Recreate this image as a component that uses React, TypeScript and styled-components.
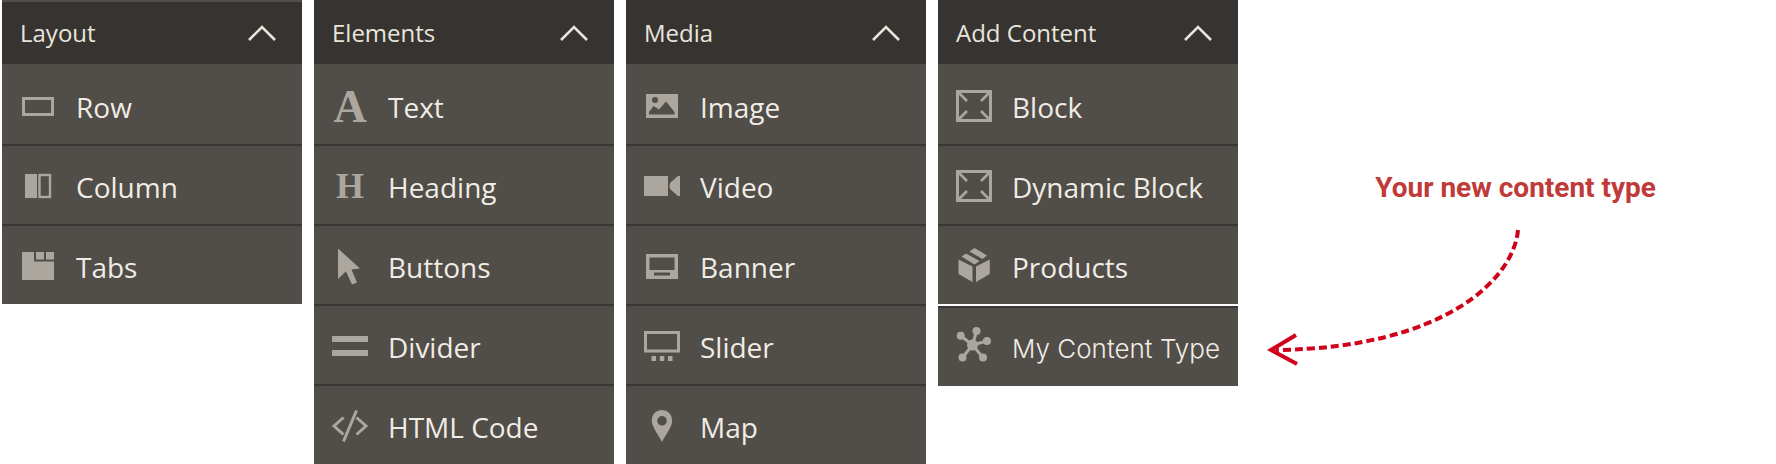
import React, { useState } from "react";
import styled, { createGlobalStyle } from "styled-components";

const GlobalStyle = createGlobalStyle`
  *, *::before, *::after { box-sizing: border-box; }
  body {
    margin: 0;
    background: #ffffff;
    font-family: "Open Sans", "Noto Sans", sans-serif;
  }
`;

const Page = styled.main`
  display: flex;
  align-items: flex-start;
  padding-left: 2px;
`;

const Panels = styled.div`
  display: flex;
  align-items: flex-start;
  flex: 0 1 auto;
  gap: 12px;
`;

const Panel = styled.section`
  width: 300px;
`;

const PanelTitle = styled.h2`
  margin: 0;
  font-size: 24px;
  font-weight: 400;
`;

const PanelToggle = styled.button<{ $edged?: boolean }>`
  display: flex;
  align-items: center;
  justify-content: space-between;
  width: 100%;
  height: 64px;
  padding: ${(p) => (p.$edged ? "0 26px 0 18px" : "2px 26px 0 18px")};
  border: 0;
  border-top: ${(p) => (p.$edged ? "2px solid #514d48" : "0")};
  background: #373330;
  color: #e9e5dd;
  font: inherit;
  line-height: 32px;
  text-align: left;
  cursor: pointer;
`;

const Chevron = styled.svg<{ $open: boolean }>`
  width: 28px;
  height: 18px;
  fill: none;
  stroke: #e9e5dd;
  stroke-width: 2.6;
  transform: ${(p) => (p.$open ? "none" : "rotate(180deg)")};
`;

const TypeList = styled.ul`
  margin: 0;
  padding: 0;
  list-style: none;
`;

const TypeItem = styled.li<{ $custom?: boolean }>`
  display: flex;
  align-items: center;
  gap: 20px;
  height: 80px;
  margin-top: ${(p) => (p.$custom ? "2px" : "0")};
  padding: 0 18px;
  border-top: 2px solid #3b3633;
  background: #514d48;
  color: #f0ece5;
  font-family: ${(p) => (p.$custom ? '"Inter", sans-serif' : "inherit")};
  font-size: ${(p) => (p.$custom ? "26px" : "28px")};
  font-weight: ${(p) => (p.$custom ? 300 : 400)};
  line-height: 38px;
  white-space: nowrap;
  cursor: grab;

  &:first-child {
    border-top-color: #514d48;
  }
`;

const TypeLabel = styled.span`
  padding-top: 4px;
`;

const Icon = styled.svg`
  flex: none;
  width: 36px;
  height: 36px;
  overflow: visible;
  fill: #aba79f;
`;

const Lines = styled.g`
  fill: none;
  stroke: #aba79f;
  stroke-width: 3;
`;

const Letter = styled.text<{ $size: number }>`
  font-family: "Liberation Serif", serif;
  font-size: ${(p) => p.$size}px;
  font-weight: 700;
  text-anchor: middle;
`;

const Callout = styled.aside`
  display: flex;
  flex-direction: column;
  flex: 0 0 auto;
  gap: 16px;
  width: 418px;
  padding: 168px 0 0 28px;
`;

const CalloutText = styled.p`
  margin: 0;
  color: #c03a39;
  font-family: "Roboto", "Open Sans", sans-serif;
  font-size: 28px;
  font-weight: 700;
  line-height: 40px;
  text-align: right;
  white-space: nowrap;
`;

const CalloutArrow = styled.svg`
  width: 260px;
  height: 144px;
  fill: none;
  stroke: #d0021b;
  stroke-width: 4;
`;

const blockIcon = (
  <Lines>
    <rect x="1.5" y="4.5" width="33" height="29" />
    <path d="M3 6l8 8M33 6l-8 8M3 32l8-8M33 32l-8-8" strokeWidth="2.6" />
  </Lines>
);

const icons: Record<string, React.ReactNode> = {
  row: (
    <Lines>
      <rect x="3.5" y="11.5" width="29" height="16" />
    </Lines>
  ),
  column: (
    <>
      <rect x="5" y="7" width="12" height="24" />
      <Lines>
        <rect x="19.5" y="8" width="10.5" height="22" strokeWidth="2.4" />
      </Lines>
    </>
  ),
  tabs: <path d="M2 5h12v9.5h20V33H2zM16 5h8v7.5h-8zM26 5h8v7.5h-8z" />,
  text: <Letter x="18" y="35" $size={46}>A</Letter>,
  heading: <Letter x="18" y="31" $size={36}>H</Letter>,
  buttons: <path d="M6 1.5L28 21.5l-8.5 1 5.5 13-5 2-6-13L6 32z" />,
  divider: <path d="M0 9h36v6H0zM0 23h36v6H0z" />,
  code: (
    <Lines>
      <path d="M11.5 10.5L2 19l9.5 8.5M24.5 10.5L34 19l-9.5 8.5M24.5 3.5l-13 31" />
    </Lines>
  ),
  image: (
    <path
      fillRule="evenodd"
      d="M2 7h32v24H2zM14 13a3 3 0 1 0-6 0a3 3 0 1 0 6 0zM5 27.5h25.5V25L22 14.5l-7 8-5.5-3.500-4.500 6z"
    />
  ),
  video: <path d="M0 9h24v20H0zM36 9v20h-2l-7.500-6.500q-2-3.500 0-7L34 9z" />,
  banner: (
    <path fillRule="evenodd" d="M2 7h32v25H2zM5.500 10.500h25v12.500h-25zM10 25.500h16v3H10z" />
  ),
  slider: (
    <>
      <Lines>
        <rect x="1.5" y="5.5" width="33" height="18.5" />
      </Lines>
      <path d="M7.500 29h4.500v5H7.500zM15.800 29h4.500v5h-4.500zM24 29h4.500v5H24z" />
    </>
  ),
  map: (
    <path
      fillRule="evenodd"
      d="M18 3a10.200 10.200 0 0 1 10.200 10.500C28.200 20 22 27 18 35C14 27 7.800 20 7.800 13.500A10.200 10.200 0 0 1 18 3zM18 9a4.800 4.800 0 1 0 0 9.600a4.800 4.800 0 1 0 0-9.600z"
    />
  ),
  block: blockIcon,
  dynamic: blockIcon,
  products: (
    <path d="M2.500 12.500l14 7V35l-14-8zM33.800 12.500L20 19.500V35l13.800-8zM5.500 9.500L10 6.500l13.500 7.500-5 3.500zM13.500 4.500l5-3.500L31 8.500l-4.500 3.500z" />
  ),
  custom: (
    <>
      <Lines>
        <path d="M16.500 16L4.700 6.700M16.500 16l4-14M16.500 16L31 12M16.500 16L6.500 28.500M16.500 16L27 28.500" />
      </Lines>
      <circle cx="16.5" cy="16" r="5.5" />
      <circle cx="4.7" cy="6.7" r="4" />
      <circle cx="20.5" cy="2" r="4" />
      <circle cx="31" cy="12" r="4" />
      <circle cx="6.5" cy="28.5" r="4" />
      <circle cx="27" cy="28.5" r="4" />
    </>
  ),
};

interface ContentType {
  icon: string;
  label: string;
  custom?: boolean;
}

interface Group {
  title: string;
  edged?: boolean;
  types: ContentType[];
}

const groups: Group[] = [
  {
    title: "Layout",
    edged: true,
    types: [
      { icon: "row", label: "Row" },
      { icon: "column", label: "Column" },
      { icon: "tabs", label: "Tabs" },
    ],
  },
  {
    title: "Elements",
    types: [
      { icon: "text", label: "Text" },
      { icon: "heading", label: "Heading" },
      { icon: "buttons", label: "Buttons" },
      { icon: "divider", label: "Divider" },
      { icon: "code", label: "HTML Code" },
    ],
  },
  {
    title: "Media",
    types: [
      { icon: "image", label: "Image" },
      { icon: "video", label: "Video" },
      { icon: "banner", label: "Banner" },
      { icon: "slider", label: "Slider" },
      { icon: "map", label: "Map" },
    ],
  },
  {
    title: "Add Content",
    types: [
      { icon: "block", label: "Block" },
      { icon: "dynamic", label: "Dynamic Block" },
      { icon: "products", label: "Products" },
      { icon: "custom", label: "My Content Type", custom: true },
    ],
  },
];

function PanelGroup({ group }: { group: Group }) {
  const [open, setOpen] = useState(true);
  return (
    <Panel>
      <PanelTitle>
        <PanelToggle
          type="button"
          $edged={group.edged}
          aria-expanded={open}
          onClick={() => setOpen(!open)}
        >
          {group.title}
          <Chevron $open={open} viewBox="0 0 28 18" aria-hidden="true">
            <path d="M1 16L14 3l13 13" />
          </Chevron>
        </PanelToggle>
      </PanelTitle>
      {open && (
        <TypeList>
          {group.types.map((type) => (
            <TypeItem key={type.label} $custom={type.custom}>
              <Icon viewBox="0 0 36 36" aria-hidden="true">
                {icons[type.icon]}
              </Icon>
              <TypeLabel>{type.label}</TypeLabel>
            </TypeItem>
          ))}
        </TypeList>
      )}
    </Panel>
  );
}

export default function App() {
  return (
    <>
      <GlobalStyle />
      <Page>
        <Panels>
          {groups.map((group) => (
            <PanelGroup key={group.title} group={group} />
          ))}
        </Panels>
        <Callout>
          <CalloutText>Your new content type</CalloutText>
          <CalloutArrow viewBox="0 0 260 144" aria-hidden="true">
            <path d="M252 6C248 54 180 124 10 126" strokeDasharray="8 4" />
            <path d="M30 111L5 126l26 14" />
          </CalloutArrow>
        </Callout>
      </Page>
    </>
  );
}
